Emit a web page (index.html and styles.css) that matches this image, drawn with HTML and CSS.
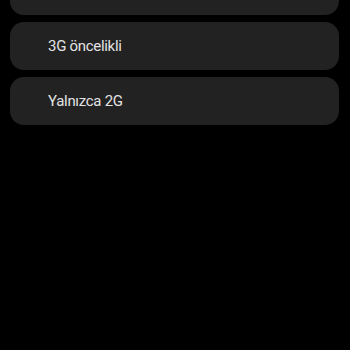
FILE: index.html
```html
<!DOCTYPE html>
<html lang="tr">
<head>
  <meta charset="UTF-8">
  <meta name="viewport" content="width=device-width, initial-scale=1.0">
  <title>Ağ modu</title>
  <link rel="stylesheet" href="styles.css">
</head>
<body>
  <ul class="modes">
    <li class="mode"></li>
    <li class="mode">3G öncelikli</li>
    <li class="mode">Yalnızca 2G</li>
  </ul>
</body>
</html>
```

FILE: styles.css
```css
* {
  margin: 0;
  padding: 0;
  box-sizing: border-box;
}
html, body {
  height: 100%;
  background-color: #000;
}
body {
  font-family: Roboto, "Liberation Sans", sans-serif;
  color: #e2e2e2;
  overflow: hidden;
}
/* liste yukarı kaydırılmış durumda */
.modes {
  list-style: none;
  display: flex;
  flex-direction: column;
  gap: 7px;
  padding: 0 11px 0 10px;
  margin-top: -33px;
}
.mode {
  height: 48px;
  display: flex;
  align-items: center;
  padding-left: 38px;
  background-color: #222222;
  border-radius: 14px;
  font-size: 15px;
  letter-spacing: -0.3px;
}
```
